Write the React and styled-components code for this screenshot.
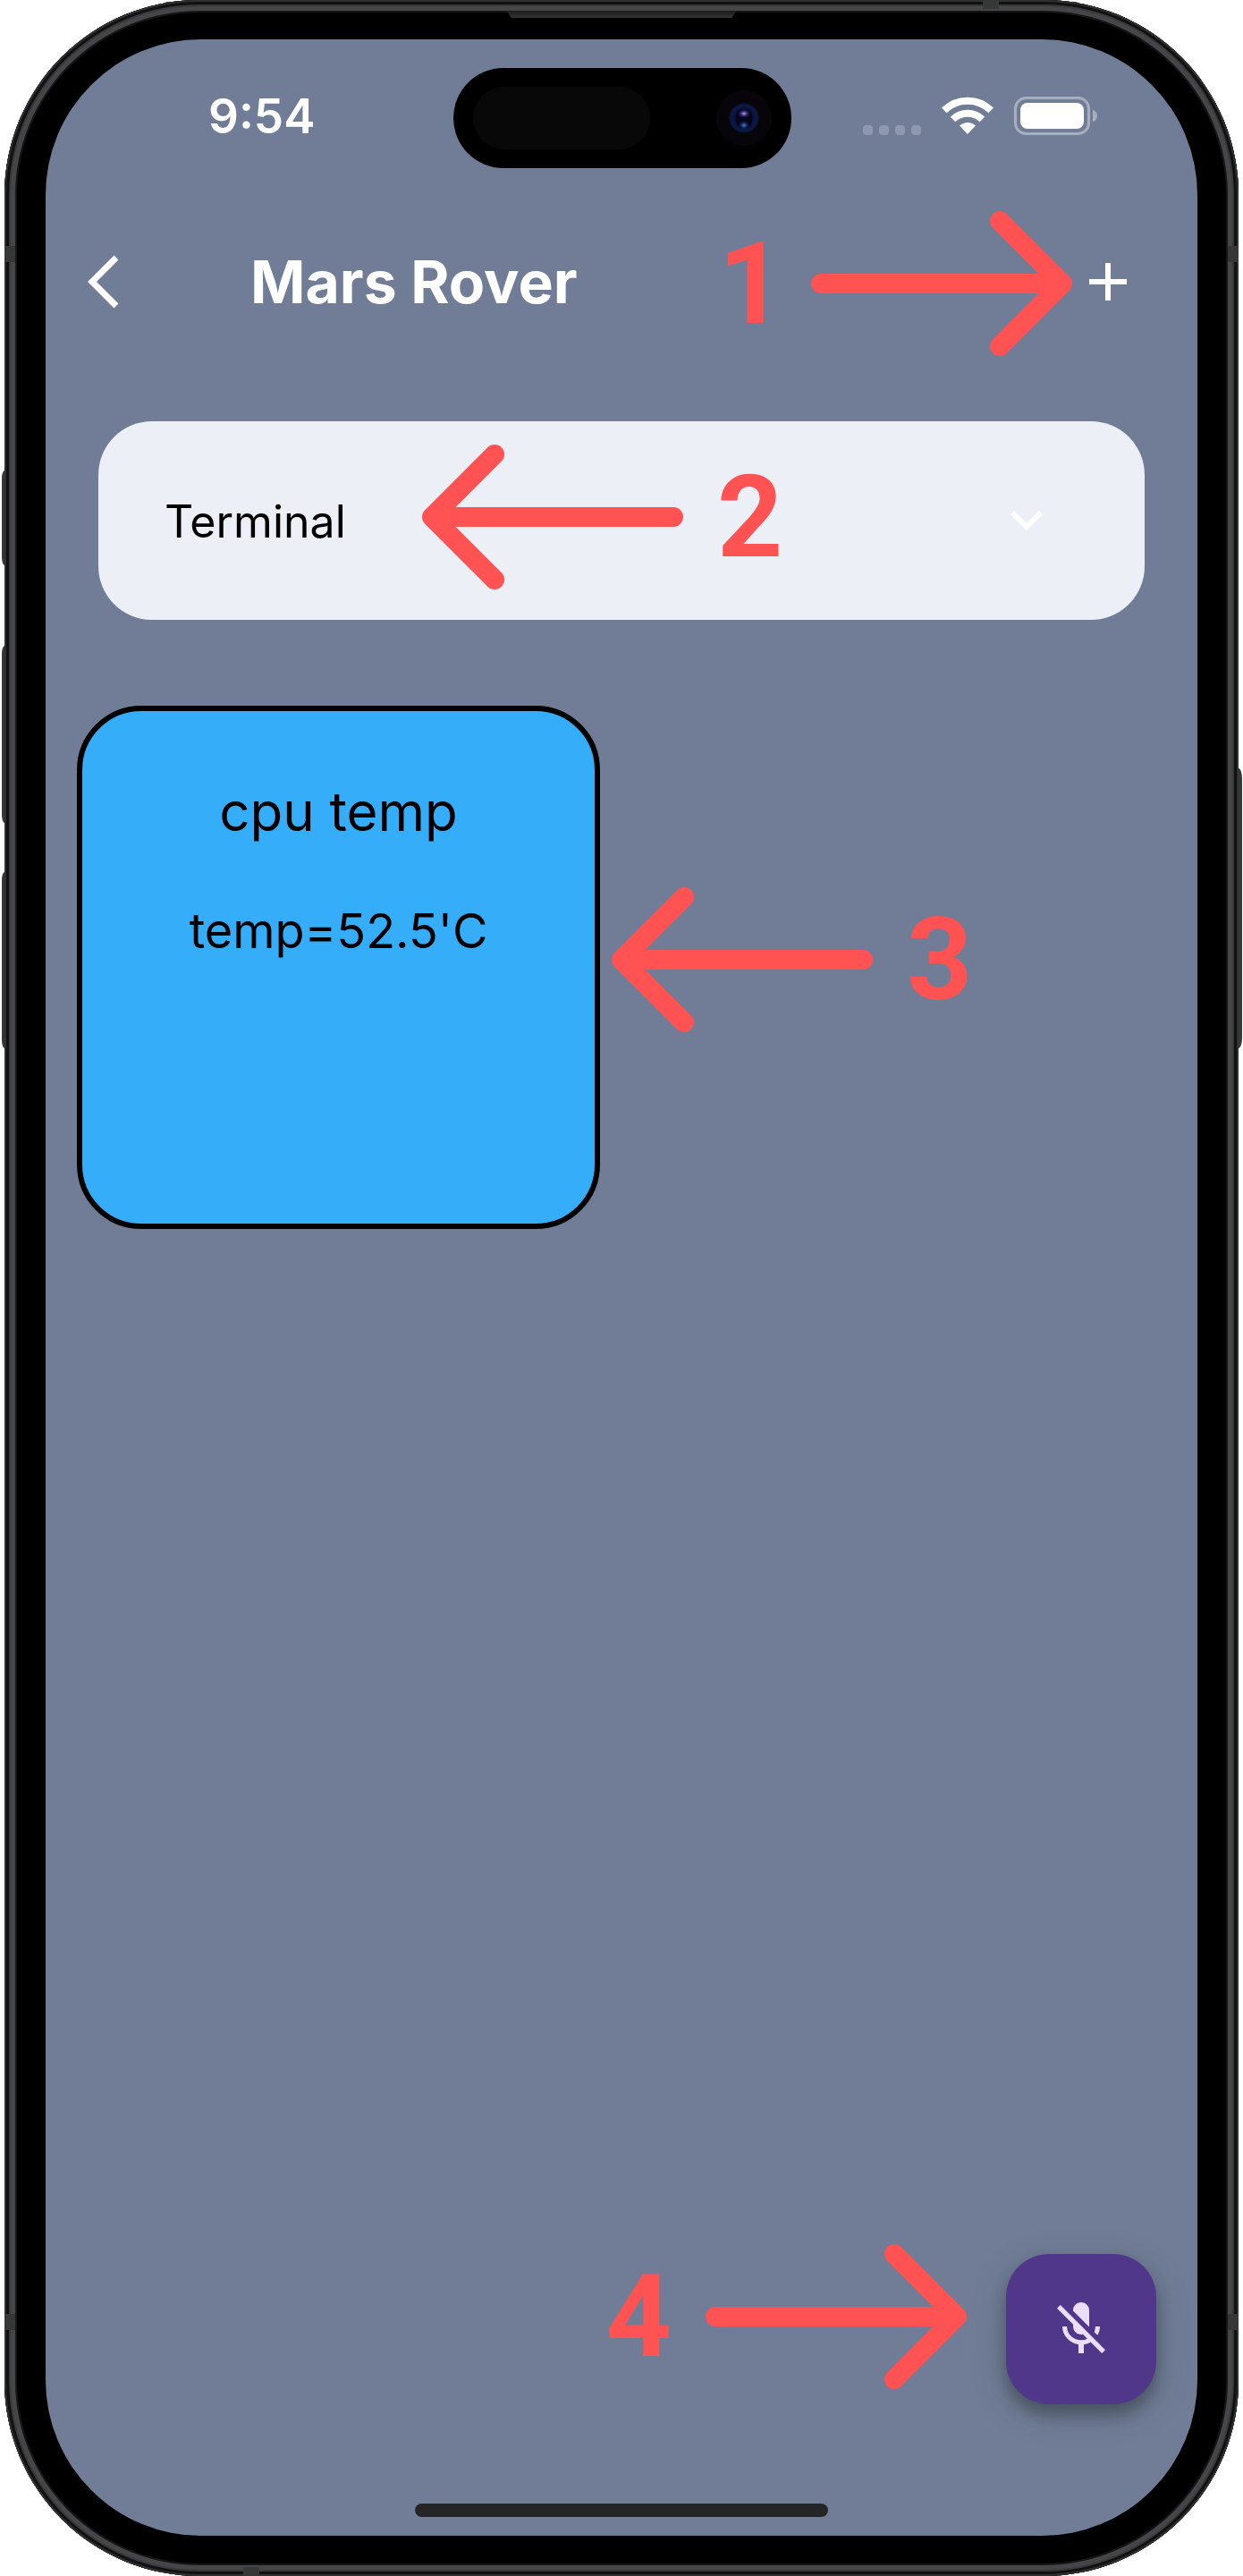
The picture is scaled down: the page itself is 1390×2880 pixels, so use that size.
import React from "react";
import styled, { createGlobalStyle } from "styled-components";

const GlobalStyle = createGlobalStyle`
  *, *::before, *::after { box-sizing: border-box; }
  body { margin: 0; background: #fff; }
  button { border: 0; padding: 0; background: none; cursor: pointer; display: flex; }
  svg { display: block; flex: none; }
`;

const sans = `Inter, "Liberation Sans", sans-serif`;

/* ---------- device shell ---------- */

const Device = styled.div`
  display: grid;
  grid-template-columns: 3px 1fr 4px;
  min-height: 100vh;
  padding: 0 1px 0 2px;
  font-family: ${sans};
`;

const Keys = styled.div`
  display: flex;
  flex-direction: column;
  padding-top: ${(p) => p.$top}px;
`;

const Key = styled.span`
  height: ${(p) => p.$length}px;
  margin-bottom: ${(p) => p.$after || 0}px;
  background: #353837;
  border-radius: ${(p) => (p.$right ? "0 4px 4px 0 / 0 12px 12px 0" : "4px 0 0 4px / 12px 0 0 12px")};
`;

const Body = styled.div`
  position: relative;
  display: flex;
  flex-direction: column;
  padding: 12px 46px 45px;
  border-radius: 218px;
  background: #000;
  box-shadow:
    inset 0 0 0 2px #2f3130,
    inset 0 0 0 5px #101111,
    inset 0 0 0 7px #39393a,
    inset 0 0 0 12px #464648,
    inset 0 0 0 14px #161616;
`;

const Band = styled.span`
  position: absolute;
  background: #363838;
  ${(p) => (p.$flat ? "width: 18px; height: 10px;" : "width: 12px; height: 18px;")}
  ${(p) => p.$edge}: 0;
  ${(p) => p.$from}: ${(p) => p.$at}px;
`;

const Speaker = styled.div`
  width: 257px;
  height: 8px;
  margin: 0 auto 24px;
  background: linear-gradient(#1c1c1c, #333);
  clip-path: polygon(0 0, 100% 0, 98% 100%, 2% 100%);
`;

const Screen = styled.main`
  flex: 1;
  display: flex;
  flex-direction: column;
  padding: 32px 0 21px;
  border-radius: 174px;
  background: #717d96;
`;

/* ---------- status bar ---------- */

const StatusBar = styled.div`
  display: grid;
  grid-template-columns: 1fr 378px 1fr;
  align-items: center;
  height: 112px;
  padding-left: 2px;
`;

const Clock = styled.time`
  padding: 0 0 4px 180px;
  color: #fff;
  font-size: 53px;
  line-height: 64px;
  font-weight: 600;
`;

const Island = styled.div`
  display: flex;
  align-items: center;
  justify-content: space-between;
  height: 112px;
  padding: 0 22px;
  border-radius: 56px;
  background: #000;
`;

const Sensor = styled.span`
  width: 198px;
  height: 70px;
  border-radius: 35px;
  background: #080808;
`;

const Indicators = styled.div`
  display: flex;
  align-items: center;
  justify-content: flex-end;
  gap: 23px;
  padding: 0 111px 6px 0;
`;

const Cells = styled.span`
  display: flex;
  align-self: flex-end;
  gap: 7px;
`;

const Cell = styled.i`
  width: 11px;
  height: 11px;
  border-radius: 4px;
  background: #8f99ad;
`;

/* ---------- app content ---------- */

const Header = styled.header`
  display: flex;
  align-items: center;
  height: 166px;
  margin-top: 44px;
  padding: 0 79px 0 47px;
`;

const Title = styled.h1`
  margin: 0 auto 0 147px;
  color: #fff;
  font-size: 66px;
  line-height: 80px;
  font-weight: 700;
  white-space: nowrap;
`;

const AddButton = styled.button`
  margin-left: 19px;
`;

const Callout = styled.div`
  display: flex;
  align-items: center;
  gap: ${(p) => p.$gap || 38}px;
  padding-top: ${(p) => p.$drop || 0}px;
  padding-bottom: ${(p) => p.$lift || 0}px;
  pointer-events: none;
`;

const Digit = styled.span`
  color: #ff5252;
  font-family: Roboto, "Liberation Sans", sans-serif;
  font-size: 128px;
  line-height: 150px;
  font-weight: 700;
`;

const Picker = styled.div`
  display: grid;
  align-items: center;
  height: 222px;
  margin: 73px 59px 96px;
  border-radius: 60px;
  background: #edeff7;

  > * { grid-area: 1 / 1; }
`;

const PickerSelect = styled.select`
  width: 100%;
  height: 100%;
  padding: 2px 74px 0;
  border: 0;
  border-radius: 60px;
  background: transparent;
  appearance: none;
  color: #000;
  font-family: ${sans};
  font-size: 50px;
  line-height: 64px;
`;

const PickerOverlay = styled.div`
  display: flex;
  align-items: center;
  justify-content: space-between;
  padding: 0 114px 0 362px;
  pointer-events: none;
`;

const Tiles = styled.section`
  display: flex;
  align-items: center;
  gap: 13px;
  padding-left: 35px;
`;

const Tile = styled.article`
  display: flex;
  flex-direction: column;
  align-items: center;
  width: 585px;
  height: 585px;
  padding-top: 76px;
  border: 6px solid #000;
  border-radius: 72px;
  background: #35adf9;
  color: #000;
`;

const TileName = styled.h2`
  margin: 0 0 66px;
  font-size: 60px;
  line-height: 72px;
  font-weight: 400;
`;

const TileValue = styled.p`
  margin: 0;
  font-size: 54px;
  line-height: 64px;
`;

const Actions = styled.div`
  display: flex;
  align-items: center;
  justify-content: flex-end;
  gap: 44px;
  margin: auto 46px 100px 0;
`;

const MicButton = styled.button`
  align-items: center;
  justify-content: center;
  width: 168px;
  height: 168px;
  border-radius: 48px;
  background: #503789;
  box-shadow: 0 12px 16px rgba(40, 50, 50, 0.4), 0 10px 36px rgba(40, 50, 60, 0.26);
`;

const HomeIndicator = styled.div`
  width: 462px;
  height: 15px;
  margin: 0 auto;
  border-radius: 8px;
  background: #252525;
`;

/* ---------- drawings ---------- */

const Arrow = ({ left }) => (
  <svg width="292" height="162" viewBox="0 0 292 162" aria-hidden="true">
    <path
      d={left ? "M281 81H11M81 11L11 81L81 151" : "M11 81H281M211 11L281 81L211 151"}
      fill="none"
      stroke="#ff5252"
      strokeWidth="22"
      strokeLinecap="round"
      strokeLinejoin="round"
    />
  </svg>
);

const Camera = () => (
  <svg width="62" height="62" viewBox="0 0 62 62" aria-hidden="true">
    <defs>
      <radialGradient id="lens">
        <stop offset="0" stopColor="#06061c" />
        <stop offset="0.55" stopColor="#0b0c34" />
        <stop offset="0.85" stopColor="#0c1a48" />
        <stop offset="1" stopColor="#07091c" />
      </radialGradient>
      <radialGradient id="glintTop">
        <stop offset="0" stopColor="#a9a0f5" />
        <stop offset="1" stopColor="#2c22a0" stopOpacity="0" />
      </radialGradient>
      <radialGradient id="glintBottom">
        <stop offset="0" stopColor="#3a8fb8" />
        <stop offset="1" stopColor="#1c2aa0" stopOpacity="0" />
      </radialGradient>
    </defs>
    <circle cx="31" cy="31" r="31" fill="#070509" />
    <circle cx="31" cy="31" r="17" fill="url(#lens)" />
    <rect x="22" y="21" width="18" height="21" rx="8" fill="#04041a" />
    <ellipse cx="31" cy="26" rx="7" ry="5" fill="url(#glintTop)" />
    <ellipse cx="31" cy="39" rx="6" ry="5" fill="url(#glintBottom)" />
  </svg>
);

const Wifi = () => (
  <svg width="58" height="42" viewBox="0 0 58 42" aria-hidden="true">
    <path d="M29 42L20 32.500Q24 29 29 29Q34 29 38 32.500Z" fill="#fff" />
    <path d="M12.600 25.500A23.500 23.500 0 0 1 45.400 25.500" fill="none" stroke="#fff" strokeWidth="8" />
    <path d="M2.800 15.300A37.500 37.500 0 0 1 55.200 15.300" fill="none" stroke="#fff" strokeWidth="8" />
  </svg>
);

const Battery = () => (
  <svg width="94" height="43" viewBox="0 0 94 43" aria-hidden="true">
    <rect x="1.500" y="1.500" width="82" height="40" rx="12" fill="none" stroke="#a6aec0" strokeWidth="3" />
    <rect x="7" y="7" width="71" height="29" rx="8" fill="#fff" />
    <path d="M88 14.500Q93 17 93 21.500Q93 26 88 28.500Z" fill="#a6aec0" />
  </svg>
);

const BackIcon = () => (
  <svg width="35" height="60" viewBox="0 0 35 60" aria-hidden="true">
    <path d="M32 3L5 30L32 57" fill="none" stroke="#fff" strokeWidth="7" />
  </svg>
);

const PlusIcon = () => (
  <svg width="42" height="42" viewBox="0 0 42 42" aria-hidden="true">
    <path d="M21 0V42M0 21H42" stroke="#fff" strokeWidth="6" />
  </svg>
);

const ChevronIcon = () => (
  <svg width="36" height="22" viewBox="0 0 36 22" aria-hidden="true">
    <path d="M2 2L18 18L34 2" fill="none" stroke="#fff" strokeWidth="6" />
  </svg>
);

const MicOffIcon = () => (
  <svg width="72" height="72" viewBox="0 0 24 24" fill="#eaddff" aria-hidden="true">
    <path d="M19 11h-1.700c0 .74-.16 1.430-.43 2.050l1.230 1.230c.56-.98.9-2.090.9-3.280zm-4.020.17c0-.06.02-.11.02-.17V5c0-1.660-1.340-3-3-3S9 3.340 9 5v.18l5.980 5.990zM4.270 3L3 4.270l6.010 6.010V11c0 1.660 1.330 3 2.990 3 .22 0 .44-.03.65-.08l1.660 1.660c-.71.33-1.500.52-2.310.52-2.760 0-5.300-2.100-5.300-5.100H5c0 3.410 2.720 6.230 6 6.720V21h2v-3.280c.91-.13 1.770-.45 2.540-.9L19.730 21 21 19.730 4.270 3z" />
  </svg>
);

export default function App() {
  return (
    <>
      <GlobalStyle />
      <Device>
        <Keys $top={526}>
          <Key $length={106} $after={90} />
          <Key $length={198} $after={55} />
          <Key $length={197} />
        </Keys>
        <Body>
          <Band $edge="left" $from="top" $at={275} />
          <Band $edge="right" $from="top" $at={275} />
          <Band $edge="left" $from="bottom" $at={275} />
          <Band $edge="right" $from="bottom" $at={275} />
          <Band $flat $edge="top" $from="right" $at={268} />
          <Band $flat $edge="bottom" $from="left" $at={267} />
          <Speaker />
          <Screen>
            <StatusBar>
              <Clock>9:54</Clock>
              <Island>
                <Sensor />
                <Camera />
              </Island>
              <Indicators>
                <Cells>
                  <Cell />
                  <Cell />
                  <Cell />
                  <Cell />
                </Cells>
                <Wifi />
                <Battery />
              </Indicators>
            </StatusBar>

            <Header>
              <button type="button" aria-label="Back">
                <BackIcon />
              </button>
              <Title>Mars Rover</Title>
              <Callout $gap={30} $drop={4}>
                <Digit>1</Digit>
                <Arrow />
              </Callout>
              <AddButton type="button" aria-label="Add">
                <PlusIcon />
              </AddButton>
            </Header>

            <Picker>
              <PickerSelect aria-label="Widget type" defaultValue="Terminal">
                <option>Terminal</option>
              </PickerSelect>
              <PickerOverlay>
                <Callout $lift={8}>
                  <Arrow left />
                  <Digit>2</Digit>
                </Callout>
                <ChevronIcon />
              </PickerOverlay>
            </Picker>

            <Tiles>
              <Tile>
                <TileName>cpu temp</TileName>
                <TileValue>temp=52.5'C</TileValue>
              </Tile>
              <Callout $lift={18}>
                <Arrow left />
                <Digit>3</Digit>
              </Callout>
            </Tiles>

            <Actions>
              <Callout $lift={28}>
                <Digit>4</Digit>
                <Arrow />
              </Callout>
              <MicButton type="button" aria-label="Microphone off">
                <MicOffIcon />
              </MicButton>
            </Actions>
            <HomeIndicator />
          </Screen>
        </Body>
        <Keys $top={859}>
          <Key $right $length={313} />
        </Keys>
      </Device>
    </>
  );
}
